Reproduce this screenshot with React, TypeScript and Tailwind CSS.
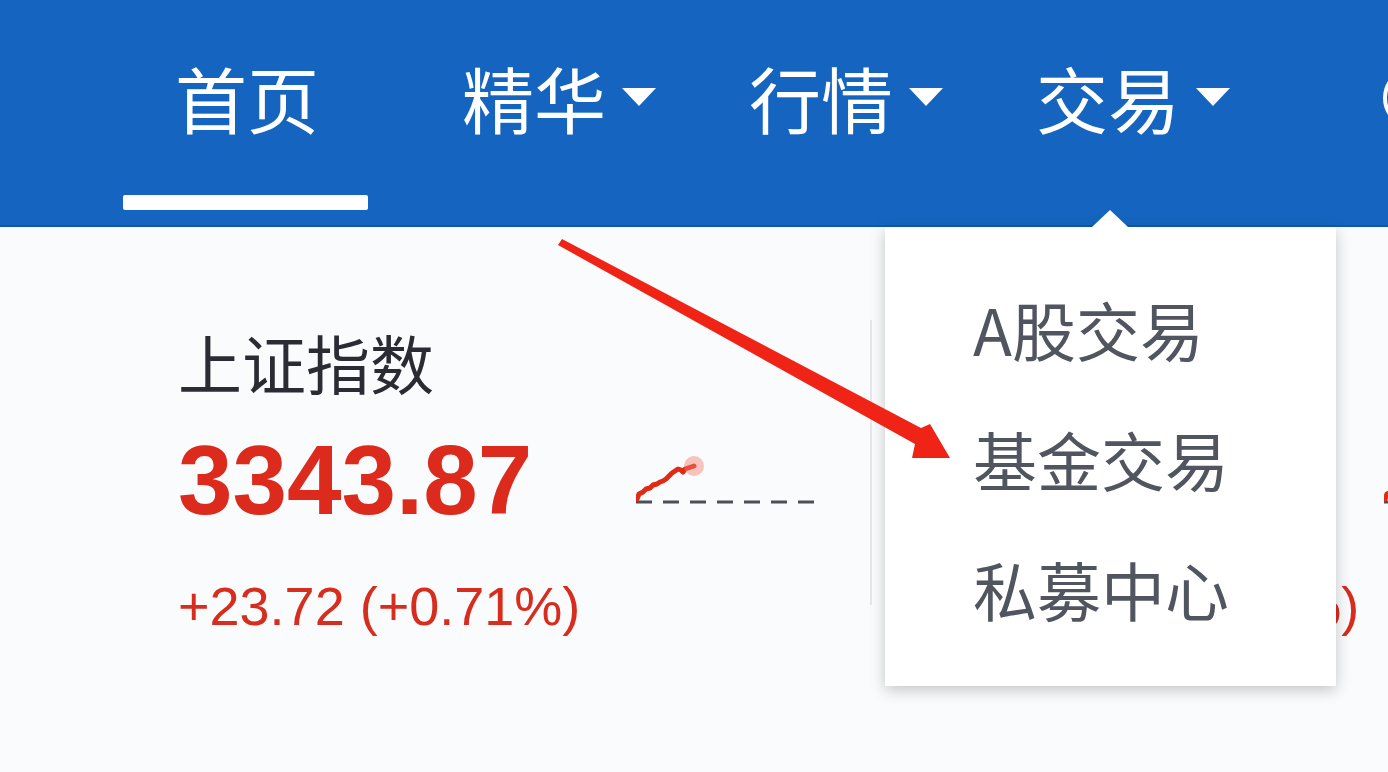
const CJK = "font-['Noto_Sans_CJK_SC','Noto_Sans',sans-serif]"
const NUM = "font-['Liberation_Sans',Arial,sans-serif]"

const NAV: { label: string; menu: boolean }[] = [
  { label: '首页', menu: false },
  { label: '精华', menu: true },
  { label: '行情', menu: true },
  { label: '交易', menu: true },
]

const TRADE_MENU = ['A股交易', '基金交易', '私募中心']

type Index = { name: string; price: string; change: string; sparkGap: string }

const INDICES: Index[] = [
  { name: '上证指数', price: '3343.87', change: '+23.72 (+0.71%)', sparkGap: 'ml-[104px]' },
  { name: '沪深300', price: '4872.36', change: '+41.25 (+0.85%)', sparkGap: 'ml-[73px]' },
]

function Caret({ hidden }: { hidden?: boolean }) {
  return (
    <svg width="34" height="18" viewBox="0 0 34 18" className={`shrink-0 ${hidden ? 'invisible' : ''}`}>
      <path d="M0 0 H34 L17 18 Z" fill="#fff" />
    </svg>
  )
}

function Sparkline() {
  return (
    <svg width="180" height="52" viewBox="0 0 180 52" className="shrink-0">
      <line x1="0" y1="47" x2="180" y2="47" stroke="#4b4f58" strokeWidth="3" strokeDasharray="16 11" />
      <polyline
        points="1,44 3,39 7,37 10,34 14,33 17,30 21,29 24,27 27,26 30,24 33,21 36,18 39,16 42,14 45,15 47,17 49,14 52,13 55,12 58,11"
        fill="none"
        stroke="#e02a16"
        strokeWidth="5"
        strokeLinejoin="round"
        strokeLinecap="round"
      />
      <circle cx="58" cy="11" r="10" fill="#ef7f6f" fillOpacity="0.45" />
    </svg>
  )
}

function IndexCard({ item, className }: { item: Index; className: string }) {
  return (
    <div className={`flex shrink-0 flex-col whitespace-nowrap ${className}`}>
      <div className={`${CJK} text-[64px] leading-none text-[#2b2c33]`}>{item.name}</div>
      <div className="mt-[38px] flex items-start">
        <span className={`${NUM} text-[98px] font-bold leading-none text-[#dc2a1c]`}>{item.price}</span>
        <div className={`mt-[24px] ${item.sparkGap}`}>
          <Sparkline />
        </div>
      </div>
      <div className={`${NUM} mt-[50px] text-[54px] leading-none text-[#d62d1e]`}>{item.change}</div>
    </div>
  )
}

export default function App() {
  return (
    <div className="relative h-[772px] w-[1388px] overflow-hidden bg-[#fafbfc]">
      {/* Top nav */}
      <header className="flex h-[227px] items-start gap-[93px] border-b-2 border-[#0f59ad] bg-[#1565c0] pl-[175px] pt-[61px]">
        {NAV.map((n, i) => (
          <div key={n.label} className="relative flex shrink-0 items-center gap-[16px] whitespace-nowrap">
            <span className={`${CJK} text-[72px] leading-none text-white`}>{n.label}</span>
            <Caret hidden={!n.menu} />
            {i === 0 && (
              <span className="absolute left-[-52px] top-[134px] h-[15px] w-[245px] rounded-[2px] bg-white" />
            )}
          </div>
        ))}
        <div className="ml-[60px] mt-[6px] h-[62px] w-[220px] shrink-0 rounded-full border-[4px] border-white" />
      </header>

      {/* Index cards */}
      <div className="flex items-start">
        <IndexCard item={INDICES[0]} className="w-[870px] pl-[178px] pt-[102px]" />
        <div className="mt-[93px] h-[285px] w-[2px] shrink-0 bg-[#e6e7ea]" />
        <IndexCard item={INDICES[1]} className="pl-[85px] pt-[102px]" />
      </div>

      {/* 交易 dropdown */}
      <div className="absolute left-[885px] top-[227px] h-[459px] w-[451px] bg-white shadow-[0_4px_14px_rgba(0,0,0,0.22)]">
        <span className="absolute -top-[17px] left-[207px] h-0 w-0 border-x-[18px] border-b-[17px] border-x-transparent border-b-white" />
        <ul className="flex flex-col gap-[66px] pl-[88px] pt-[69px]">
          {TRADE_MENU.map((m) => (
            <li key={m} className={`${CJK} whitespace-nowrap text-[64px] leading-none text-[#50555f]`}>
              {m}
            </li>
          ))}
        </ul>
      </div>

      {/* annotation arrow */}
      <svg className="pointer-events-none absolute inset-0" width="1388" height="772" viewBox="0 0 1388 772">
        <polygon
          points="562,239 921,428 930,424 950,458 912,458 915,444 558,245"
          fill="#ef2416"
        />
      </svg>
    </div>
  )
}
